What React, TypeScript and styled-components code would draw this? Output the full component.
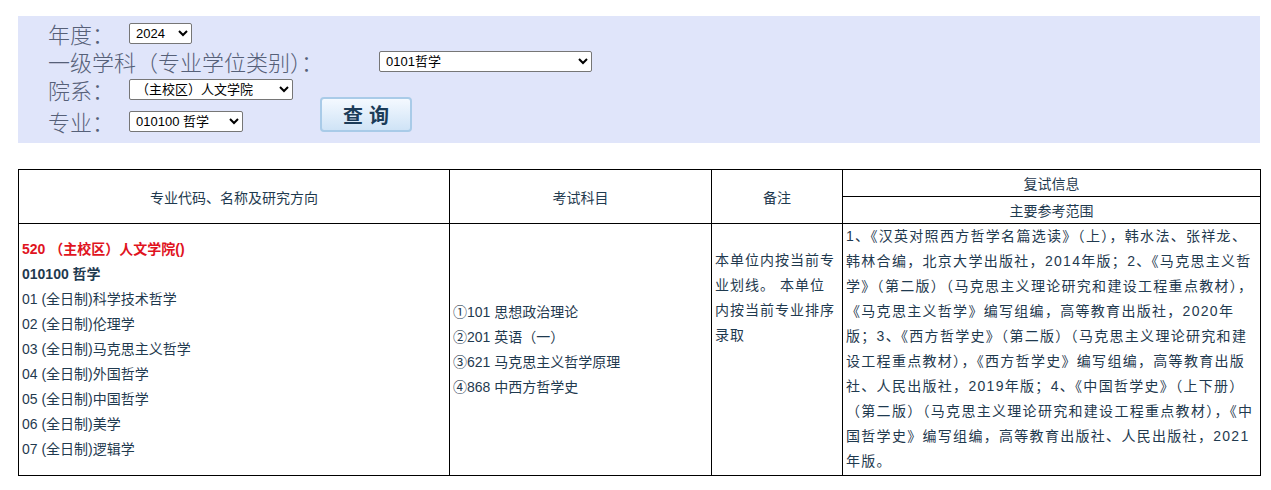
import React from "react";
import styled, { createGlobalStyle } from "styled-components";

const G = createGlobalStyle`
  body { margin: 0; background: #fff; font-family: "Liberation Sans", "Noto Sans CJK SC", sans-serif; }
`;
const Page = styled.div` padding: 16px 11px 0 18px; `;
const Panel = styled.div`
  background: #e0e5fa; height: 127px; padding: 3px 0 0 30px; box-sizing: border-box;
  font-family: "Liberation Serif", "Noto Sans CJK SC", serif; color: #566078; font-size: 22px; font-weight: 300;
`;
const Row = styled.div<{ $h: number }>` display: flex; align-items: center; height: ${p => p.$h}px; `;
const Label = styled.span<{ $w: number }>` width: ${p => p.$w}px; white-space: nowrap; `;
const Sel = styled.select<{ $w: number }>`
  width: ${p => p.$w}px; height: 21px; font-size: 13px; font-family: "Liberation Sans", "Noto Sans CJK SC", sans-serif;
  border: 1px solid #767676; border-radius: 2px; background: #fff; color: #000; padding: 0 2px;
`;
const Btn = styled.button`
  margin-left: 77px; margin-top: -14px; width: 92px; height: 35px; border: 2px solid #a9cbe8; border-radius: 4px;
  background: linear-gradient(#f4f9ff, #cfe3f6); font-weight: bold; font-size: 20px; letter-spacing: 6px;
  color: #1b3b58; font-family: "Noto Sans CJK SC", sans-serif; padding: 0 0 0 6px;
`;
const Table = styled.table`
  margin-top: 26px; width: 1242px; border-collapse: collapse; table-layout: fixed; font-size: 14px; color: #1f3a4f;
  td { border: 1.5px solid #000; }
`;
const Col = styled.col<{ $w: number }>` width: ${p => p.$w}px; `;
const Head = styled.td` text-align: center; height: 26px; padding: 0; `;
const Cell = styled.td<{ $pt?: number; $top?: boolean; $ls?: number }>`
  vertical-align: ${p => p.$top ? "top" : "middle"}; padding: ${p => p.$pt ?? 0}px 3px 0 3px; line-height: 25px;
  letter-spacing: ${p => p.$ls ?? 0}px;
`;
const Red = styled.div` color: #e0141e; font-weight: bold; `;
const Bold = styled.div` font-weight: bold; `;

export default function App() {
  return (
    <Page>
      <G />
      <Panel>
        <Row $h={28}><Label $w={81}>年度：</Label><Sel $w={63}><option>2024</option></Sel></Row>
        <Row $h={28}><Label $w={331}>一级学科（专业学位类别）：</Label><Sel $w={213}><option>0101哲学</option></Sel></Row>
        <Row $h={28}><Label $w={81}>院系：</Label><Sel $w={164}><option>（主校区）人文学院</option></Sel></Row>
        <Row $h={36}><Label $w={81}>专业：</Label><Sel $w={114}><option>010100 哲学</option></Sel><Btn>查询</Btn></Row>
      </Panel>
      <Table>
        <colgroup><Col $w={431} /><Col $w={262} /><Col $w={131} /><Col $w={418} /></colgroup>
        <tbody>
          <tr>
            <Head rowSpan={2}>专业代码、名称及研究方向</Head>
            <Head rowSpan={2}>考试科目</Head>
            <Head rowSpan={2}>备注</Head>
            <Head>复试信息</Head>
          </tr>
          <tr><Head>主要参考范围</Head></tr>
          <tr style={{ height: 252 }}>
            <Cell>
              <Red>520 （主校区）人文学院()</Red>
              <Bold>010100 哲学</Bold>
              <div>01 (全日制)科学技术哲学</div>
              <div>02 (全日制)伦理学</div>
              <div>03 (全日制)马克思主义哲学</div>
              <div>04 (全日制)外国哲学</div>
              <div>05 (全日制)中国哲学</div>
              <div>06 (全日制)美学</div>
              <div>07 (全日制)逻辑学</div>
            </Cell>
            <Cell>
              <div>①101 思想政治理论</div>
              <div>②201 英语（一）</div>
              <div>③621 马克思主义哲学原理</div>
              <div>④868 中西方哲学史</div>
            </Cell>
            <Cell $top $pt={24} $ls={1}>本单位内按当前专业划线。 本单位内按当前专业排序录取</Cell>
            <Cell $top $pt={0} $ls={1.3}>1、《汉英对照西方哲学名篇选读》（上），韩水法、张祥龙、韩林合编，北京大学出版社，2014年版；2、《马克思主义哲学》（第二版）（马克思主义理论研究和建设工程重点教材），《马克思主义哲学》编写组编，高等教育出版社，2020年版；3、《西方哲学史》（第二版）（马克思主义理论研究和建设工程重点教材），《西方哲学史》编写组编，高等教育出版社、人民出版社，2019年版；4、《中国哲学史》（上下册）（第二版）（马克思主义理论研究和建设工程重点教材），《中国哲学史》编写组编，高等教育出版社、人民出版社，2021年版。</Cell>
          </tr>
        </tbody>
      </Table>
    </Page>
  );
}
